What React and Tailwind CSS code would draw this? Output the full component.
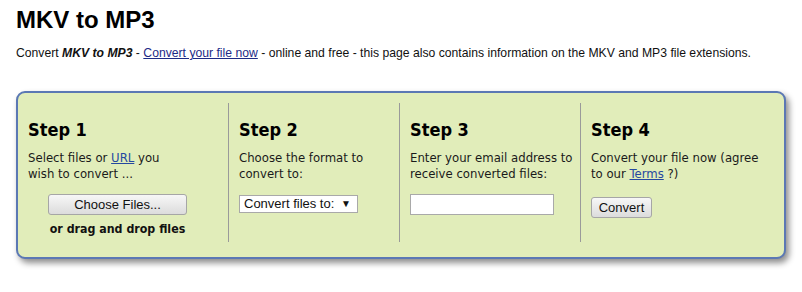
import React from "react";

const step = "font-['DejaVu_Sans_Condensed','DejaVu_Sans',sans-serif]";
const arial = "font-['Liberation_Sans',Arial,sans-serif]";

function Col({ className = "", children }) {
  return (
    <div className={`flex flex-col pt-[16px] pl-[10px] ${className}`}>{children}</div>
  );
}

function H({ children }) {
  return (
    <h2 className={`${step} text-[18px] leading-[22px] font-bold text-black mb-[9px]`}>
      {children}
    </h2>
  );
}

function P({ children }) {
  return (
    <p className={`${step} text-[13px] leading-[16px] text-[#1a1a1a] whitespace-nowrap`}>
      {children}
    </p>
  );
}

const btn = `${arial} text-[13px] leading-[19px] text-[#111] border border-[#a6a6a6] rounded-[3px] bg-gradient-to-b from-[#f7f7f7] to-[#dcdcdc] h-[21px]`;

export default function App() {
  return (
    <div className="bg-white w-[802px] h-[292px] px-[16px] overflow-hidden">
      <h1 className={`${arial} pt-[6px] text-[24px] leading-[28px] font-bold text-black`}>
        MKV to MP3
      </h1>
      <p className={`${arial} mt-[11px] text-[12.2px] leading-[16px] text-[#111] whitespace-nowrap`}>
        Convert <b><i>MKV to MP3</i></b> -{" "}
        <a className="underline text-[#1d2a86]">Convert your file now</a> - online and free - this page also contains information on the MKV and MP3 file extensions.
      </p>
      <div className="mt-[30px] w-[770px] h-[168px] border-2 border-[#5b78b4] rounded-[9px] bg-[#e1edba] shadow-[3px_4px_6px_rgba(0,0,0,0.45)] flex pt-[10px] pb-[15px]">
        <Col className="w-[211px] border-r border-[#9a9a9a] pr-[21px]">
          <H>Step 1</H>
          <P>
            Select files or <a className="underline text-[#2548a0]">URL</a> you
            <br />
            wish to convert ...
          </P>
          <div className="flex flex-col items-center mt-[12px]">
            <button className={`${btn} h-[20px] leading-[18px] w-[139px]`}>Choose Files...</button>
            <div className={`${step} mt-[6px] text-[12.3px] leading-[16px] font-bold text-[#111] whitespace-nowrap`}>
              or drag and drop files
            </div>
          </div>
        </Col>
        <Col className="w-[171px] border-r border-[#9a9a9a]">
          <H>Step 2</H>
          <P>
            Choose the format to
            <br />
            convert to:
          </P>
          <div className={`${arial} mt-[13px] w-[119px] h-[18px] bg-white border border-[#a9a9a9] flex items-center justify-between pl-[4px] pr-[6px] text-[13px] leading-[16px] text-[#111]`}>
            <span>Convert files to:</span>
            <span className="text-[10px]">▼</span>
          </div>
        </Col>
        <Col className="w-[181px] border-r border-[#9a9a9a]">
          <H>Step 3</H>
          <P>
            Enter your email address to
            <br />
            receive converted files:
          </P>
          <input className="mt-[12px] w-[144px] h-[21px] bg-white border border-[#a9a9a9] outline-none" />
        </Col>
        <Col className="flex-1">
          <H>Step 4</H>
          <P>
            Convert your file now (agree
            <br />
            to our <a className="underline text-[#2548a0]">Terms</a> ?)
          </P>
          <div className="mt-[12px]">
            <button className={`${btn} w-[61px]`}>Convert</button>
          </div>
        </Col>
      </div>
    </div>
  );
}
